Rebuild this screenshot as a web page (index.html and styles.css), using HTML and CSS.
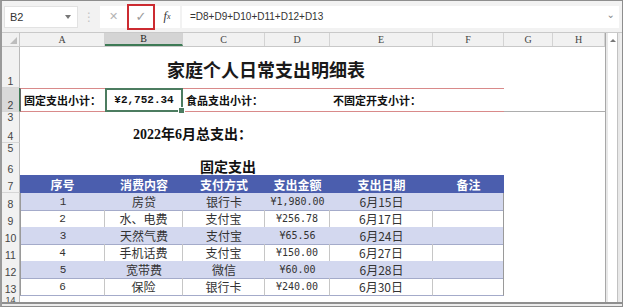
FILE: index.html
```html
<!DOCTYPE html>
<html lang="zh-cn">
<head>
	<meta charset="utf-8"/>
	<title>家庭个人日常支出明细表</title>
	<link rel="stylesheet" href="styles.css">
</head>

<body>
	<div class="window">
		<div class="toolbar">
			<div class="namebox"><span>B2</span><span class="caret"></span></div>
			<div class="grip">⋮</div>
			<div class="actions">
				<span class="act cancel">✕</span>
				<span class="act enter">✓</span>
				<span class="act fx">f<sub>x</sub></span>
			</div>
			<div class="formula"><span>=D8+D9+D10+D11+D12+D13</span><span class="chev">⌄</span></div>
		</div>

		<div class="workarea">
			<div class="sheet">
				<div class="row colheads">
					<div class="corner"><span class="tri"></span></div>
					<div class="ch">A</div>
					<div class="ch on">B</div>
					<div class="ch">C</div>
					<div class="ch">D</div>
					<div class="ch">E</div>
					<div class="ch">F</div>
					<div class="ch">G</div>
					<div class="ch">H</div>
				</div>

				<div class="row h-title">
					<div class="rh">1</div>
					<div class="cell wide title">家庭个人日常支出明细表</div>
				</div>

				<div class="row h-sum">
					<div class="rh on">2</div>
					<div class="cell sum first">固定支出小计：</div>
					<div class="cell sum picked">¥2,752.34</div>
					<div class="cell sum">食品支出小计：</div>
					<div class="cell sum"></div>
					<div class="cell sum">不固定开支小计：</div>
					<div class="cell sum"></div>
					<div class="cell rest"></div>
					<div class="cell rest"></div>
				</div>

				<div class="row h-gap1">
					<div class="rh short">3</div>
				</div>

				<div class="row h-total">
					<div class="rh">4</div>
					<div class="cell wide total">2022年6月总支出：</div>
				</div>

				<div class="row h-gap2">
					<div class="rh">5</div>
				</div>

				<div class="row h-sub">
					<div class="rh">6</div>
					<div class="cell wide subtitle">固定支出</div>
				</div>

				<div class="row h-head">
					<div class="rh">7</div>
					<div class="cell th">序号</div>
					<div class="cell th">消费内容</div>
					<div class="cell th">支付方式</div>
					<div class="cell th">支出金额</div>
					<div class="cell th">支出日期</div>
					<div class="cell th">备注</div>
				</div>

				<div class="row h-data band">
					<div class="rh">8</div>
					<div class="cell td no">1</div>
					<div class="cell td">房贷</div>
					<div class="cell td">银行卡</div>
					<div class="cell td money">¥1,980.00</div>
					<div class="cell td">6月15日</div>
					<div class="cell td last"></div>
				</div>
				<div class="row h-data plain">
					<div class="rh">9</div>
					<div class="cell td no">2</div>
					<div class="cell td">水、电费</div>
					<div class="cell td">支付宝</div>
					<div class="cell td money">¥256.78</div>
					<div class="cell td">6月17日</div>
					<div class="cell td last"></div>
				</div>
				<div class="row h-data band">
					<div class="rh">10</div>
					<div class="cell td no">3</div>
					<div class="cell td">天然气费</div>
					<div class="cell td">支付宝</div>
					<div class="cell td money">¥65.56</div>
					<div class="cell td">6月24日</div>
					<div class="cell td last"></div>
				</div>
				<div class="row h-data plain">
					<div class="rh">11</div>
					<div class="cell td no">4</div>
					<div class="cell td">手机话费</div>
					<div class="cell td">支付宝</div>
					<div class="cell td money">¥150.00</div>
					<div class="cell td">6月27日</div>
					<div class="cell td last"></div>
				</div>
				<div class="row h-data band">
					<div class="rh">12</div>
					<div class="cell td no">5</div>
					<div class="cell td">宽带费</div>
					<div class="cell td">微信</div>
					<div class="cell td money">¥60.00</div>
					<div class="cell td">6月28日</div>
					<div class="cell td last"></div>
				</div>
				<div class="row h-data plain">
					<div class="rh">13</div>
					<div class="cell td no">6</div>
					<div class="cell td">保险</div>
					<div class="cell td">银行卡</div>
					<div class="cell td money">¥240.00</div>
					<div class="cell td">6月30日</div>
					<div class="cell td last"></div>
				</div>

				<div class="row h-cut">
					<div class="rh cut">14</div>
				</div>
			</div>

			<div class="vscroll">
				<div class="track"><span class="up"></span></div>
			</div>
		</div>

		<div class="bottomline"></div>
	</div>
</body>
</html>
```

FILE: styles.css
```css
* {
	-webkit-box-sizing: border-box;
	box-sizing: border-box;
}
body {
	margin: 0;
	font-family: "Noto Sans CJK SC", sans-serif;
	font-size: 12px;
}
.window {
	width: 623px;
	height: 307px;
	background-color: #efefef;
	border: 1px solid #8e8e8e;
	border-left: 2px solid #9a9a9a;
	display: flex;
	flex-direction: column;
}

/* formula bar */
.toolbar {
	height: 32px;
	display: flex;
	align-items: center;
	padding: 0 3px 0 2px;
	border-bottom: 1px solid #c9c9c9;
	background-color: #f2f2f2;
}
.namebox {
	width: 74px;
	height: 22px;
	background-color: #fff;
	border: 1px solid #e2e2e2;
	display: flex;
	align-items: center;
	justify-content: space-between;
	padding: 0 6px 0 5px;
	font-family: "Liberation Sans", sans-serif;
	font-size: 11px;
	color: #333;
}
.caret {
	width: 0;
	height: 0;
	border-left: 3px solid transparent;
	border-right: 3px solid transparent;
	border-top: 4px solid #777;
}
.grip {
	width: 22px;
	text-align: center;
	color: #c4c4c4;
	font-family: "DejaVu Sans", sans-serif;
	font-size: 12px;
}
.actions {
	width: 80px;
	height: 22px;
	background-color: #fff;
	display: flex;
	align-items: center;
}
.act {
	display: flex;
	align-items: center;
	justify-content: center;
	height: 22px;
	font-family: "DejaVu Sans", sans-serif;
}
.cancel {
	width: 27px;
	color: #b4b4b4;
	font-size: 11px;
}
.enter {
	width: 28px;
	height: 26px;
	border: 2px solid #cc2b31;
	color: #9a9a9a;
	font-size: 13px;
}
.fx {
	width: 24px;
	font-family: "Liberation Serif", serif;
	font-style: italic;
	font-size: 12px;
	color: #333;
}
.fx sub {
	font-size: 8px;
	vertical-align: -1px;
}
.formula {
	flex: 1;
	height: 22px;
	margin-left: 2px;
	background-color: #fff;
	display: flex;
	align-items: center;
	justify-content: space-between;
	padding: 0 4px 0 8px;
	font-family: "Liberation Sans", sans-serif;
	font-size: 10px;
	color: #333;
}
.chev {
	color: #888;
	font-family: "DejaVu Sans", sans-serif;
	font-size: 10px;
	margin-top: -4px;
}

/* sheet */
.workarea {
	display: flex;
	height: 269px;
}
.sheet {
	width: 603px;
	background-color: #fff;
	display: flex;
	flex-direction: column;
}
.row {
	display: grid;
	grid-template-columns: 18px 85px 78px 82px 65px 103px 71px 49px 52px;
}
.colheads {height: 14px; background-color: #f1f1f1; border-bottom: 1px solid #c8c8c8;}
.h-title {height: 41px;}
.h-sum {height: 24px;}
.h-gap1 {height: 5px;}
.h-total {height: 26px;}
.h-gap2 {height: 9px;}
.h-sub {height: 23px;}
.h-head {height: 18px;}
.h-data {height: 17px;}
.h-cut {height: 7px;}

.corner {
	border-right: 1px solid #c8c8c8;
	display: flex;
	align-items: flex-end;
	justify-content: flex-end;
	padding: 0 2px 2px 0;
}
.tri {
	width: 0;
	height: 0;
	border-left: 7px solid transparent;
	border-bottom: 7px solid #bdbdbd;
}
.ch {
	border-right: 1px solid #d3d3d3;
	display: flex;
	align-items: center;
	justify-content: center;
	font-family: "Liberation Serif", serif;
	font-size: 10px;
	color: #444;
}
.ch.on {
	background-color: #d4d4d4;
	border-bottom: 2px solid #3d7a55;
	color: #222;
}
.rh {
	grid-column: 1;
	background-color: #f1f1f1;
	border-right: 1px solid #b9b9b9;
	border-bottom: 1px solid #d6d6d6;
	display: flex;
	align-items: flex-end;
	justify-content: center;
	font-family: "Liberation Sans", sans-serif;
	font-size: 10.5px;
	line-height: 1;
	color: #444;
	padding-bottom: 1px;
}
.rh.on {
	background-color: #d9d9d9;
	border-right-color: #3d7a55;
}
.rh.short {
	position: relative;
	z-index: 1;
	align-items: flex-start;
	padding-top: 0;
	border-bottom: none;
}
.rh.cut {
	align-items: flex-start;
	padding-top: 1px;
	font-size: 9px;
	overflow: hidden;
	border-bottom: none;
}

.cell {
	display: flex;
	align-items: center;
	white-space: nowrap;
	color: #111;
}
.wide {grid-column: 2 / 8;}
.title {
	justify-content: center;
	padding: 3px 0 0 8px;
	font-family: "Liberation Serif", "Noto Sans CJK SC", serif;
	font-size: 18px;
	font-weight: 700;
	color: #1a1a1a;
}
.total {
	padding: 5px 0 0 113px;
	font-family: "Liberation Serif", "Noto Sans CJK SC", serif;
	font-size: 14px;
	font-weight: 700;
}
.subtitle {
	padding: 4px 0 0 180px;
	font-size: 14px;
	font-weight: 700;
}

.sum {
	border-top: 1px solid #d98a8a;
	border-bottom: 1px solid #d98a8a;
	padding-left: 3px;
	font-size: 11px;
	font-weight: 700;
}
.sum.first {border-left: 1px solid #666; padding-left: 3px;}
.sum.picked {
	position: relative;
	border: 2px solid #4c7c60;
	justify-content: center;
	padding-left: 0;
	font-family: "Liberation Mono", monospace;
	font-size: 11px;
	font-weight: 700;
}
.sum.picked::after {
	content: "";
	position: absolute;
	right: -4px;
	bottom: -4px;
	width: 5px;
	height: 5px;
	background-color: #4c7c60;
	border: 1px solid #fff;
}
.rest {border-bottom: 1px solid #adadad;}

/* table */
.th {
	background-color: #4b5eae;
	color: #fff;
	font-weight: 700;
	justify-content: center;
}
.td {
	justify-content: center;
	border-bottom: 1px solid #a4abca;
	color: #333;
}
.td.no {
	border-left: 1px solid #9a9a9a;
	font-family: "Liberation Mono", monospace;
	font-size: 11px;
}
.td.money {
	font-family: "DejaVu Sans Mono", monospace;
	font-size: 10px;
}
.td.last {border-right: 1px solid #9a9a9a;}
.band .td {background-color: #d3d8ef;}
.plain .td {border-right: 1px solid #c6c6c6;}
.plain .td.last {border-right-color: #9a9a9a;}
.h-data:last-of-type .td {border-bottom-color: #999;}

/* scrollbar */
.vscroll {
	width: 15px;
	border-left: 1px solid #a8a8a8;
	background-color: #e8e8e8;
	padding: 0 2px 0 2px;
}
.track {
	height: 100%;
	background-color: #fff;
	border-right: 1px solid #c2c2c2;
	display: flex;
	justify-content: center;
	padding-top: 6px;
}
.up {
	width: 0;
	height: 0;
	border-left: 3px solid transparent;
	border-right: 3px solid transparent;
	border-bottom: 3px solid #777;
}
.bottomline {
	flex: 1;
	border-top: 2px solid #8f8f8f;
	background-color: #ececec;
}
```
